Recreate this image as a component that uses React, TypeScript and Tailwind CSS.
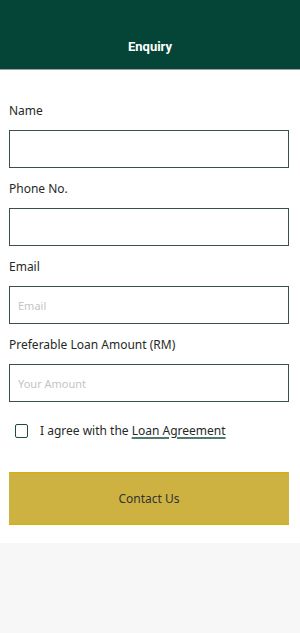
import React, { useState } from 'react';

const Field: React.FC<{ label: string; placeholder?: string; type?: string }> = ({ label, placeholder, type = 'text' }) => (
  <div className="flex flex-col">
    <label className="text-[12px] leading-[16px] text-[#1f2a27] mb-[11px]">{label}</label>
    <input
      type={type}
      placeholder={placeholder}
      className="h-[38px] w-full border border-[#3d4f49] bg-white px-[8px] text-[11px] text-[#222] placeholder:text-[#c4c4c4] outline-none"
    />
  </div>
);

const App: React.FC = () => {
  const [agreed, setAgreed] = useState(false);

  return (
    <div className="min-h-[633px] bg-[#f7f7f7] font-['Noto_Sans',sans-serif]">
      <div className="bg-white">
        {/* header */}
        <div className="h-[70px] bg-[#044537] border-b border-[#9aa5a1] flex items-end justify-center pb-[14px]">
          <h1 className="text-white text-[13px] font-bold leading-[16px] font-['Roboto',sans-serif]">Enquiry</h1>
        </div>

        <div className="pl-[9px] pr-[11px] pt-[33px] pb-[18px] flex flex-col gap-[13px]">
          <Field label="Name" />
          <Field label="Phone No." type="tel" />
          <Field label="Email" placeholder="Email" type="email" />
          <Field label="Preferable Loan Amount (RM)" placeholder="Your Amount" />

          <label className="flex items-center mt-[8px] ml-[6px] cursor-pointer">
            <input
              type="checkbox"
              checked={agreed}
              onChange={(e) => setAgreed(e.target.checked)}
              className="appearance-none w-[13px] h-[14px] border-[1.5px] border-[#1e4a3e] rounded-[2px] checked:bg-[#044537]"
            />
            <span className="ml-[12px] text-[12px] text-[#1f2a27] leading-[16px]">
              I agree with the{' '}
              <span className="underline decoration-[#4f7a6c] decoration-[1.5px] underline-offset-[2px]">Loan Agreement</span>
            </span>
          </label>

          <button className="mt-[20px] h-[53px] w-full bg-[#cdb242] border-y border-[#d4b000] text-[12px] text-[#333] font-['Noto_Sans',sans-serif]">
            Contact Us
          </button>
        </div>
      </div>
    </div>
  );
};

export default App;
